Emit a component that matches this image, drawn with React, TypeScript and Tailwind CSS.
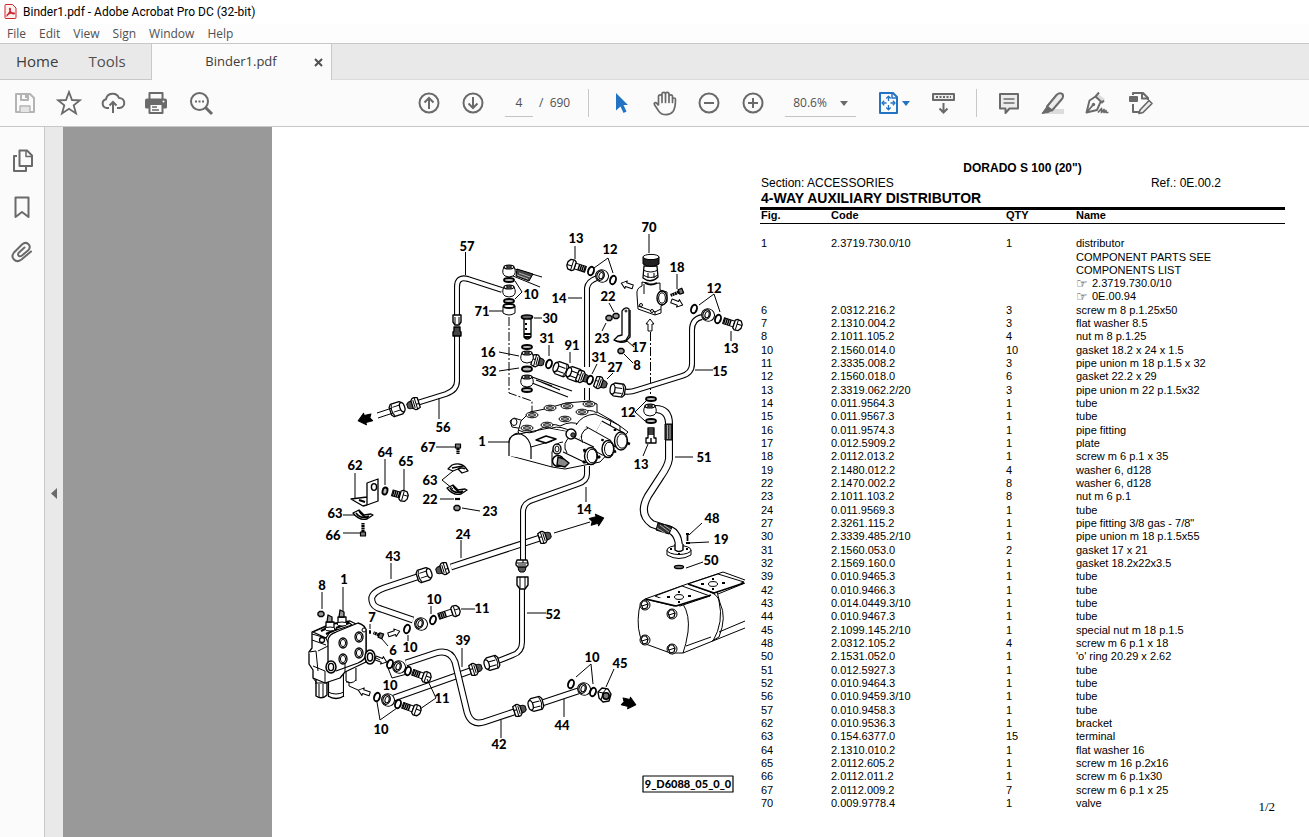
import type { ReactNode } from 'react';

type Point = [number, number];
type Part = { fig: string; code: string; qty: string; name: string };

const menus = ['File', 'Edit', 'View', 'Sign', 'Window', 'Help'];

const parts: Part[] = [
  { fig: '6', code: '2.0312.216.2', qty: '3', name: 'screw m 8 p.1.25x50' },
  { fig: '7', code: '2.1310.004.2', qty: '3', name: 'flat washer 8.5' },
  { fig: '8', code: '2.1011.105.2', qty: '4', name: 'nut m 8 p.1.25' },
  { fig: '10', code: '2.1560.014.0', qty: '10', name: 'gasket 18.2 x 24 x 1.5' },
  { fig: '11', code: '2.3335.008.2', qty: '3', name: 'pipe union m 18 p.1.5 x 32' },
  { fig: '12', code: '2.1560.018.0', qty: '6', name: 'gasket 22.2 x 29' },
  { fig: '13', code: '2.3319.062.2/20', qty: '3', name: 'pipe union m 22 p.1.5x32' },
  { fig: '14', code: '0.011.9564.3', qty: '1', name: 'tube' },
  { fig: '15', code: '0.011.9567.3', qty: '1', name: 'tube' },
  { fig: '16', code: '0.011.9574.3', qty: '1', name: 'pipe fitting' },
  { fig: '17', code: '0.012.5909.2', qty: '1', name: 'plate' },
  { fig: '18', code: '2.0112.013.2', qty: '1', name: 'screw m 6 p.1 x 35' },
  { fig: '19', code: '2.1480.012.2', qty: '4', name: 'washer 6, d128' },
  { fig: '22', code: '2.1470.002.2', qty: '8', name: 'washer 6, d128' },
  { fig: '23', code: '2.1011.103.2', qty: '8', name: 'nut m 6 p.1' },
  { fig: '24', code: '0.011.9569.3', qty: '1', name: 'tube' },
  { fig: '27', code: '2.3261.115.2', qty: '1', name: 'pipe fitting 3/8 gas - 7/8"' },
  { fig: '30', code: '2.3339.485.2/10', qty: '1', name: 'pipe union m 18 p.1.5x55' },
  { fig: '31', code: '2.1560.053.0', qty: '2', name: 'gasket 17 x 21' },
  { fig: '32', code: '2.1569.160.0', qty: '1', name: 'gasket 18.2x22x3.5' },
  { fig: '39', code: '0.010.9465.3', qty: '1', name: 'tube' },
  { fig: '42', code: '0.010.9466.3', qty: '1', name: 'tube' },
  { fig: '43', code: '0.014.0449.3/10', qty: '1', name: 'tube' },
  { fig: '44', code: '0.010.9467.3', qty: '1', name: 'tube' },
  { fig: '45', code: '2.1099.145.2/10', qty: '1', name: 'special nut m 18 p.1.5' },
  { fig: '48', code: '2.0312.105.2', qty: '4', name: 'screw m 6 p.1 x 18' },
  { fig: '50', code: '2.1531.052.0', qty: '1', name: "'o' ring 20.29 x 2.62" },
  { fig: '51', code: '0.012.5927.3', qty: '1', name: 'tube' },
  { fig: '52', code: '0.010.9464.3', qty: '1', name: 'tube' },
  { fig: '56', code: '0.010.9459.3/10', qty: '1', name: 'tube' },
  { fig: '57', code: '0.010.9458.3', qty: '1', name: 'tube' },
  { fig: '62', code: '0.010.9536.3', qty: '1', name: 'bracket' },
  { fig: '63', code: '0.154.6377.0', qty: '15', name: 'terminal' },
  { fig: '64', code: '2.1310.010.2', qty: '1', name: 'flat washer 16' },
  { fig: '65', code: '2.0112.605.2', qty: '1', name: 'screw m 16 p.2x16' },
  { fig: '66', code: '2.0112.011.2', qty: '1', name: 'screw m 6 p.1x30' },
  { fig: '67', code: '2.0112.009.2', qty: '7', name: 'screw m 6 p.1 x 25' },
  { fig: '70', code: '0.009.9778.4', qty: '1', name: 'valve' },
];

// Callout numbers of the exploded view: text, x, y (centre)
const callouts: [string, number, number][] = [
  ['57', 467, 246], ['10', 531, 294], ['71', 482, 311], ['30', 550, 318], ['31', 547, 338],
  ['16', 488, 352], ['32', 489, 371], ['91', 572, 345], ['31', 599, 357], ['27', 615, 367],
  ['13', 576, 238], ['12', 610, 249], ['70', 649, 227], ['18', 677, 267], ['14', 559, 298],
  ['22', 608, 296], ['23', 602, 338], ['17', 639, 347], ['8', 637, 365], ['12', 714, 288],
  ['13', 731, 348], ['15', 720, 371], ['12', 628, 412], ['13', 641, 464], ['51', 704, 457],
  ['56', 443, 427], ['1', 482, 441], ['67', 428, 447], ['63', 430, 480], ['22', 430, 499],
  ['23', 490, 511], ['62', 355, 465], ['64', 385, 452], ['65', 406, 461], ['63', 335, 513],
  ['66', 333, 535], ['24', 463, 534], ['43', 393, 556], ['14', 584, 509], ['48', 712, 518],
  ['19', 721, 539], ['50', 711, 560], ['8', 322, 585], ['1', 344, 579], ['7', 372, 617],
  ['6', 393, 650], ['10', 434, 599], ['11', 482, 608], ['10', 410, 647], ['39', 463, 640],
  ['10', 390, 685], ['11', 442, 698], ['10', 381, 729], ['42', 499, 744], ['52', 553, 614],
  ['10', 592, 657], ['45', 620, 663], ['44', 562, 725],
];

const leaders = [
  'M465.5 252V275', 'M515 281L522 292L515 299', 'M489 311H503', 'M534 318H542', 'M549 345V356',
  'M499 352L519 356', 'M499 371L519 368', 'M570 352V363', 'M597 364L592 374', 'M613 373L607 379',
  'M575 246V259', 'M594 268L608 258L613 273', 'M649 234V253', 'M677 274V289', 'M568 298H582',
  'M609 303L614 312', 'M602 331L606 323', 'M626 340L634 347', 'M633 363L624 354',
  'M699 305L714 294L720 312', 'M731 331V341', 'M695 370H713', 'M646 401L635 412L645 421',
  'M643 456L648 444', 'M675 457H693', 'M439 398V419', 'M488 442H510', 'M436 447H455',
  'M453 471L442 480L453 489', 'M440 499H454', 'M462 508L480 511', 'M355 473V498', 'M385 459V485',
  'M404 469V490', 'M343 515H355', 'M343 533H360', 'M461 540V558', 'M391 563V579', 'M586 487V502',
  'M702 523L689 535', 'M709 542L688 543', 'M686 568L703 562', 'M322 592V609', 'M343 587V611',
  'M370 624V629', 'M388 646L382 639', 'M431 606V614', 'M461 609H475', 'M408 635V641', 'M462 648V667',
  'M388 668L392 678L407 674', 'M427 679L436 698L420 709', 'M377 702L380 720L397 708', 'M501 720V738',
  'M527 613H546', 'M576 677L591 664L593 684', 'M614 669L606 687', 'M564 699V717',
  'M554 533L590 522', 'M377 413L392 408M378 418L393 413', 'M346 682H349V686L358 690M374 657L380 660',
];

function Tube({ d, w = 6 }: { d: string; w?: number }) {
  return (
    <g fill="none">
      <path d={d} stroke="#000" strokeWidth={w} />
      <path d={d} stroke="#fff" strokeWidth={w - 2.2} />
    </g>
  );
}

function Ring({ at, rx = 5, ry = 2, rot = 0 }: { at: Point; rx?: number; ry?: number; rot?: number }) {
  return (
    <ellipse cx={at[0]} cy={at[1]} rx={rx} ry={ry} fill="#bbb" strokeWidth={1.9}
      transform={`rotate(${rot} ${at[0]} ${at[1]})`} />
  );
}

// Ring seen from the side, as threaded on a banjo bolt
function SideRing({ at }: { at: Point }) {
  return (
    <ellipse cx={at[0]} cy={at[1]} rx={2.8} ry={4.4} fill="#fff" strokeWidth={1.9}
      transform={`rotate(18 ${at[0]} ${at[1]})`} />
  );
}

// Vertical banjo eye
function Banjo({ at }: { at: Point }) {
  return (
    <g transform={`translate(${at[0]} ${at[1]})`} fill="#fff">
      <path d="M-5-4Q-8 2-4 5Q0 7 4 5Q8 2 5-4Z" />
      <ellipse cy={-4} rx={5} ry={1.9} strokeWidth={1.3} />
      <ellipse cy={-4} rx={2.8} ry={0.8} />
    </g>
  );
}

// Banjo eye that faces the reader
function Eye({ at }: { at: Point }) {
  return (
    <g transform={`translate(${at[0]} ${at[1]}) rotate(18)`} fill="#fff">
      <ellipse rx={6.5} ry={6.2} />
      <ellipse cx={-1.5} rx={3.6} ry={4.8} strokeWidth={1.3} />
      <ellipse cx={-1} rx={2} ry={3.2} />
    </g>
  );
}

function HexNut({ at, rot }: { at: Point; rot: number }) {
  return (
    <g transform={`translate(${at[0]} ${at[1]}) rotate(${rot})`} fill="#fff">
      <path d="M-6-5L-4-6.500H5L7-4V4L5 6.500H-4L-6 5Z" strokeWidth={1.3} />
      <path d="M-6-2H4M-6 3H4M4-6Q7 0 4 6" />
      <ellipse cx={-5.5} rx={2.4} ry={4.8} strokeWidth={1.3} />
    </g>
  );
}

// Collar with a threaded tip
function Fitting({ at, rot }: { at: Point; rot: number }) {
  return (
    <g transform={`translate(${at[0]} ${at[1]}) rotate(${rot})`} fill="#fff">
      <path d="M0-4L5-3.500L7-2V2L5 3.500L0 4Z" fill="#555" />
      <path d="M-5-5L-2-6H0L2-4V4L0 6H-2L-5 5Z" strokeWidth={1.3} />
      <path d="M-2-6V6M0-4V4M-5-1H-2" />
    </g>
  );
}

function Bolt({ at, rot, len = 11 }: { at: Point; rot: number; len?: number }) {
  return (
    <g transform={`translate(${at[0]} ${at[1]}) rotate(${rot})`} fill="#fff">
      <rect x={-len} y={-3} width={len} height={6} />
      <path d={`M${-len + 1}-3V3M${-len + 3}-3V3M${-len + 5}-3V3M${-len + 7}-3V3`} strokeWidth={1.5} />
      <path d="M0-4L2-5.500L6-5L8-2V2L6 5L2 5.500L0 4Z" strokeWidth={1.3} />
      <path d="M3-5V5M3-1H8" />
    </g>
  );
}

function SmallScrew({ at, rot, len = 9 }: { at: Point; rot: number; len?: number }) {
  return (
    <g transform={`translate(${at[0]} ${at[1]}) rotate(${rot})`}>
      <path d={`M0 0H${-len}`} strokeWidth={3.2} strokeDasharray="2 0.500" />
      <rect x={0} y={-2.5} width={4} height={5} fill="#777" strokeWidth={1.2} />
    </g>
  );
}

function SmallNut({ at }: { at: Point }) {
  return (
    <g transform={`translate(${at[0]} ${at[1]})`} fill="#999">
      <path d="M-3-1L-1.500-2.500H1.500L3-1V1L1.500 2.500H-1.500L-3 1Z" strokeWidth={1.4} />
    </g>
  );
}

function FlowArrow({ at, rot, solid = false }: { at: Point; rot: number; solid?: boolean }) {
  return (
    <path
      d={solid ? 'M-7-3.500H0V-6L7 0L0 6V3.500H-7L-5 0Z' : 'M-6-2H1V-4L6 0L1 4V2H-6Z'}
      transform={`translate(${at[0]} ${at[1]}) rotate(${rot})`}
      fill={solid ? '#000' : '#fff'}
    />
  );
}

function Clamp({ at, flip = false }: { at: Point; flip?: boolean }) {
  return (
    <g transform={`translate(${at[0]} ${at[1]})`}>
      {flip ? (
        <>
          <path d="M-10-2L-4-5L1 0L8-1L10 0L4 4Q-4 6-10-2Z" fill="#fff" strokeWidth={1.3} />
          <path d="M-7-2Q-2 5 6 1M-4-4Q0 2 5 3" strokeWidth={1.6} />
        </>
      ) : (
        <>
          <path d="M-10 0L-6-4Q2-7 7-2L10 2L4 4L0 0L-5 2Z" fill="#fff" strokeWidth={1.3} />
          <path d="M-6-1L5-3M0 0Q4-2 7 0" strokeWidth={1.4} />
        </>
      )}
    </g>
  );
}

// Distributor block in the middle of the view
function Distributor() {
  const ports: Point[] = [
    [532, 415], [550, 408], [567, 406], [589, 404], [527, 428], [547, 425], [565, 419], [582, 412],
  ];
  return (
    <g fill="#fff">
      <path d="M510 421L514 418L524 421V429L512 427Z" />
      <ellipse cx={514} cy={422} rx={3} ry={3.5} />
      <path d="M518 432L521 421L530 412L545 409L566 403L590 401L597 404V412L611 420L620 426L628 432L600 462L565 469L552 467L511 456V440Q512 433 519 433Z" />
      <path d="M509 456V441Q511 433 521 434Q530 438 531 448V459" strokeWidth={1.2} />
      <path d="M519 434L549 428L566 431M518 430Q530 436 540 429Q552 422 560 426Q572 420 580 425M531 447L552 441M580 413Q590 408 597 413" />
      <path d="M552 467V452Q556 442 563 442M552 428Q560 425 572 432" />
      <path d="M536 440L546 436L556 439L546 443Z" strokeWidth={1.5} />
      <path d="M576 425Q582 415 595 414L611 421L609 431M609 420L620 426V432" />
      <Tube d="M598 428L620 440" w={17} />
      <Tube d="M582 434L607 448" w={18} />
      <Tube d="M567 444L590 455" w={19} />
      <path d="M567 453Q561 443 571 436M583 443Q578 433 588 428" />
      <ellipse cx={591} cy={456} rx={6.5} ry={8.5} strokeWidth={1.4} />
      <ellipse cx={592} cy={456} rx={4.8} ry={6.8} />
      <ellipse cx={608} cy={449} rx={6} ry={8.5} strokeWidth={1.4} />
      <ellipse cx={609} cy={449} rx={4.5} ry={6.8} />
      <ellipse cx={621} cy={441} rx={6.5} ry={9} strokeWidth={1.4} />
      <ellipse cx={622} cy={441} rx={5} ry={7.2} />
      {ports.map(([x, y]) => (
        <g key={`${x}-${y}`}>
          <ellipse cx={x} cy={y} rx={6} ry={2.8} />
          <ellipse cx={x} cy={y} rx={3.6} ry={1.3} fill="#ccc" />
        </g>
      ))}
      <ellipse cx={557} cy={449} rx={4} ry={5} strokeWidth={1.4} />
      <ellipse cx={557} cy={449} rx={2} ry={3} />
      <circle cx={571} cy={434} r={5} strokeWidth={1.4} />
      <circle cx={573} cy={435} r={2.2} fill="#555" />
      <circle cx={558} cy={461} r={5.5} strokeWidth={1.5} />
      <path d="M558 457L564 459L569 463L565 467L557 465Z" fill="#888" strokeWidth={1.4} />
      <path d="M585 452L584 449M585 463L583 461M598 458L600 456M602 441L603 439M614 452L616 451M627 443L630 444M615 431V429" strokeWidth={2.6} />
    </g>
  );
}

// Valve block at the lower left, seen assembled
function LowerValve() {
  const ports: Point[] = [[343, 643], [359, 637], [343, 659], [359, 653]];
  return (
    <g fill="#fff">
      <Tube d="M351 668V681" w={11} />
      <path d="M346 681Q351 685 356 680" />
      <Tube d="M336 672V697" w={16} />
      <path d="M328 696Q336 701 344 696" strokeWidth={1.4} />
      <path d="M328 692Q336 696 344 692" />
      <path d="M316 679H327V695Q322 700 316 696Z" strokeWidth={1.4} />
      <path d="M319 684V697M323 684V697M315 683H327" />
      <path d="M312 640V632L330 624L350 621L366 629V662L345 672L340 678L325 683L313 678V670L309 664V652L312 648Z" strokeWidth={1.3} />
      <path d="M328 672V640Q329 634 336 632L358 623Q366 625 366 632V655Q365 660 358 663L336 671" strokeWidth={1.3} />
      <path d="M312 634L326 638L328 643M312 640L326 645M309 652L316 651L318 671M313 666L325 671M318 651L328 646M313 678L316 682M325 671V683M345 661V672" />
      <path d="M313 632L332 624L348 622L352 625L330 632L326 638Z" fill="#fff" strokeWidth={1.3} />
      <path d="M321 631L333 625M326 634L337 629M336 628L349 623" strokeWidth={2} />
      {[330, 342].map((x, i) => (
        <g key={x} transform={`translate(${x} ${620 - i * 5})`}>
          <path d="M-4 2H4V9Q0 11-4 9Z" strokeWidth={1.3} />
          <path d="M-2-5L2-3V2H-3Z" fill="#999" strokeWidth={1.3} />
          <ellipse cy={9} rx={5} ry={2} />
        </g>
      ))}
      <circle cx={322} cy={640} r={2.5} strokeWidth={1.3} />
      {ports.map(([x, y]) => (
        <g key={`${x}-${y}`}>
          <ellipse cx={x} cy={y} rx={4} ry={5} strokeWidth={1.3} />
          <ellipse cx={x} cy={y} rx={2.6} ry={3.6} />
        </g>
      ))}
      <ellipse cx={370} cy={657} rx={5} ry={7} strokeWidth={1.5} />
      <ellipse cx={370} cy={657} rx={2.6} ry={4} strokeWidth={1.5} />
      <ellipse cx={331} cy={667} rx={5} ry={6} strokeWidth={1.5} />
      <ellipse cx={331} cy={667} rx={2.6} ry={3.6} strokeWidth={1.4} />
      <circle cx={364} cy={630} r={2} />
    </g>
  );
}

function Pump() {
  const bolts: Point[] = [[645, 605], [672, 614], [645, 640], [672, 649]];
  return (
    <g fill="#fff">
      <path d="M645 599L687 584L722 572L745 580V628L683 653L673 654L643 643Q636 631 638 616Q640 602 645 599Z" stroke="none" />
      <path d="M645 599Q641 601 639 610Q636 630 643 643L673 654Q683 642 682 627Q682 613 674 606Z" />
      <path d="M645 599L687 584L723 572L745 580M674 606L683 604Q690 615 688 632Q686 645 683 653H673M683 604L715 594" />
      <path d="M710 592Q718 595 719 601Q724 622 713 641M717 592L720 603Q727 617 719 637L712 641M683 653L745 628M686 646L711 637M719 632L745 621M718 594L745 583" />
      <path d="M655 596L682 586L710 596L680 606Z" />
      <path d="M688 584L718 574L744 582L714 593Z" />
      <path d="M646 599L676 606L711 595M688 584L714 593L744 583" strokeWidth={1.6} />
      <ellipse cx={679} cy={597} rx={4.5} ry={2.4} />
      <ellipse cx={713} cy={584} rx={4.5} ry={2.4} />
      <path d="M667 597H670M688 596H691M678 592H680M678 602H680M701 584H704M722 583H725M712 579H714M712 589H714" strokeWidth={2.2} />
      {bolts.map(([x, y]) => (
        <g key={`${x}-${y}`} transform={`translate(${x} ${y})`}>
          <circle r={5} />
          <path d="M-4-1L-2-4H1L3-1L2 3L-2 4Z" strokeWidth={1.2} />
          <path d="M-3 1L3-1" />
        </g>
      ))}
    </g>
  );
}

function ReliefValve() {
  return (
    <g fill="#fff">
      <path d="M644 266H657L658 277Q651 284 643 278Z" strokeWidth={1.3} />
      <path d="M643 270Q651 274 658 270M643 275Q651 280 658 275M648 273V278M654 273V278" />
      <path d="M643 257V264Q651 269 659 264V257Z" fill="#222" />
      <ellipse cx={651} cy={257} rx={8} ry={2.6} />
      <path d="M642 282Q651 285 660 283V290L667 292V302L661 306V313L655 315L638 309L637 295Q636 288 642 286Z" />
      <path d="M644 284V294M638 306L655 312L661 309M655 311V315" />
      <ellipse cx={662} cy={298} rx={5} ry={7} strokeWidth={1.4} />
      <ellipse cx={662} cy={298} rx={3.4} ry={5.2} />
      <circle cx={641} cy={305} r={1.5} />
      <circle cx={652} cy={311} r={1.5} />
      <path d="M645 283Q651 286 657 283" strokeWidth={1.8} />
    </g>
  );
}

function ExplodedView() {
  return (
    <svg
      viewBox="300 200 445 600"
      className="h-[600px] w-[445px] shrink-0 font-['Lato',sans-serif] text-[13px] font-black"
      fill="none"
      stroke="#000"
      strokeWidth={1}
      strokeLinejoin="round"
      role="img"
      aria-label="4-way auxiliary distributor, exploded view"
    >
      {/* dash-dot assembly axes */}
      <path d="M509 317V393L532 401V412M650.500 332V394" strokeDasharray="9 2 2 2" />

      {/* delivery tubes 57 and 56 */}
      <Tube d="M457 315V287Q457 276 468 279L502 290" />
      <Tube d="M457 336V381Q457 390 446 394L417 403" />
      <path d="M453 315H461V322L459 325H455L453 322Z" fill="#fff" strokeWidth={1.4} />
      <path d="M455 317V324M459 317V324" />
      <path d="M454 327H460V331L461 332V336H453V332L454 331Z" fill="#444" strokeWidth={1.4} />
      <Fitting at={[414, 404]} rot={162} />
      <HexNut at={[397, 409]} rot={162} />
      <FlowArrow at={[365, 419]} rot={166} solid />

      {/* banjo stack 10 / 71 */}
      <path d="M515 269L542 277M513 276L540 287" />
      <path d="M517 269L533 274L529 281L516 276Z" fill="#444" />
      <path d="M519 273L530 277M517 275L528 279" stroke="#fff" strokeWidth={0.6} />
      <Banjo at={[509, 271]} />
      <Ring at={[509, 280]} />
      <Banjo at={[509, 291]} />
      <Ring at={[509, 301]} />
      <path d="M503 306V313Q509 317 515 313V306Z" fill="#fff" />
      <ellipse cx={509} cy={306} rx={5.5} ry={2} fill="#fff" strokeWidth={1.8} />

      {/* banjo stack 30 / 16 / 32 */}
      <path d="M524 318V337Q527 341 531 337V318Z" fill="#fff" strokeWidth={1.3} />
      <path d="M524 334H531M524 337H531M525 324H527M525 329H527" strokeWidth={1.8} />
      <ellipse cx={527} cy={317} rx={5.5} ry={2} fill="#666" strokeWidth={1.7} />
      <Ring at={[527, 347]} />
      <Fitting at={[537, 361]} rot={15} />
      <Banjo at={[527, 357]} />
      <Ring at={[527, 369]} ry={2.5} />
      <path d="M532 377L572 391M532 383L568 397M541 382L560 390M536 380L552 386" strokeWidth={1.2} />
      <Banjo at={[527, 381]} />
      <Ring at={[527, 390]} />

      {/* check valve 91 with its gaskets */}
      <Tube d="M587 400V388M587 367V288Q588 281 597 278" />
      <SideRing at={[549, 364]} />
      <HexNut at={[561, 369]} rot={20} />
      <HexNut at={[574, 374]} rot={20} />
      <Fitting at={[582, 377]} rot={20} />
      <SideRing at={[590, 380]} />
      <Fitting at={[600, 383]} rot={20} />
      <Tube d="M622 391Q629 393 637 390L682 376Q692 373 692 364V330Q692 319 702 317" />
      <HexNut at={[618, 390]} rot={8} />
      <Eye at={[708, 315]} />
      <SideRing at={[694, 309]} />
      <SideRing at={[718, 319]} />
      <Bolt at={[734, 324]} rot={18} />

      {/* top union 13 */}
      <Eye at={[602, 276]} />
      <Bolt at={[575, 266]} rot={198} />
      <SideRing at={[591, 271]} />
      <SideRing at={[613, 280]} />

      {/* valve 70 and its bracket */}
      <ReliefValve />
      <SmallScrew at={[679, 292]} rot={-22} />
      <FlowArrow at={[627, 285]} rot={198} />
      <FlowArrow at={[677, 303]} rot={20} />
      <FlowArrow at={[650, 325]} rot={-90} />
      <path d="M622 335V311Q625 306 629 309V335L626 340Q620 343 614 340L618 336Z" fill="#fff" strokeWidth={1.3} />
      <path d="M630 310V337L626 341M614 340Q620 344 627 341" strokeWidth={1.4} />
      <circle cx={626} cy={311} r={1} />
      <SmallNut at={[616, 316]} />
      <SmallNut at={[609, 318]} />
      <SmallNut at={[621, 351]} />

      <Distributor />

      {/* suction tube 51 */}
      <Tube d="M655 409Q669 409 669 424V459Q668 466 661 476L648 496Q638 514 652 524L664 528Q679 530 679 548" w={8} />
      <path d="M665 424H672V440H665Z" fill="#333" />
      <path d="M667.500 425V439M670 425V439" stroke="#fff" strokeWidth={0.6} />
      <path d="M658 523L672 527L669 534L656 530Z" fill="#333" />
      <path d="M660 525L669 532M657 528L665 533M664 525L671 530" stroke="#fff" strokeWidth={0.6} />
      <Banjo at={[650, 410]} />
      <Ring at={[651, 399]} />
      <Ring at={[651, 421]} />
      <path d="M648 428H654V438H656V443H646V438H648Z" fill="#fff" strokeWidth={1.3} />
      <path d="M648 430H654M648 432H654M648 434H654M651 438V443" strokeWidth={1.4} />
      <path d="M667 550V555Q679 562 691 555V550Z" fill="#fff" />
      <ellipse cx={679} cy={550} rx={12} ry={4.5} fill="#fff" />
      <path d="M675 544V550Q679 553 683 550V544" fill="#fff" strokeWidth={1.4} />
      <path d="M670 549H672M686 549H688M678 554H680" strokeWidth={2} />
      <path d="M687.500 533V541M686 534H689M686 543H690" strokeWidth={1.8} />
      <ellipse cx={679} cy={567} rx={4.5} ry={1.6} strokeWidth={1.4} fill="#777" />

      {/* clamps and bracket */}
      <SmallScrew at={[458, 448]} rot={-90} len={6} />
      <Clamp at={[458, 469]} />
      <Clamp at={[457, 490]} flip />
      <path d="M455 499H460" strokeWidth={2.2} />
      <SmallNut at={[457, 508]} />
      <path d="M367 483L378 479V501L367 505ZM367 497L351 499L363 506L367 505" fill="#fff" strokeWidth={1.3} />
      <ellipse cx={374} cy={487} rx={2.6} ry={3.4} strokeWidth={1.4} />
      <path d="M359 500L365 502" strokeWidth={2} />
      <Ring at={[385, 491]} rx={2.4} ry={3.6} rot={15} />
      <Bolt at={[400, 495]} rot={16} len={8} />
      <Clamp at={[363, 515]} flip />
      <SmallScrew at={[363, 532]} rot={90} />

      {/* tube 14, lower run, and tube 52 */}
      <Tube d="M451 567L540 538" w={7} />
      <Tube d="M587 466V474Q587 481 578 484L533 500Q523 503 523 512V563" />
      <Fitting at={[522, 565]} rot={90} />
      <Tube d="M522 588V642Q522 652 513 655L498 661" />
      <path d="M517 577H528V585L525 589H520L517 585Z" fill="#fff" strokeWidth={1.4} />
      <path d="M520 577V588M525 577V588" />
      <HexNut at={[492, 663]} rot={-16} />

      {/* tubes 24 and 43 */}
      <Fitting at={[443, 569]} rot={162} />
      <Fitting at={[544, 537]} rot={-18} />
      <FlowArrow at={[597, 520]} rot={-16} solid />
      <Tube d="M417 577L384 588Q370 593 372 601Q373 607 381 609L413 620" w={7} />
      <HexNut at={[424, 575]} rot={162} />
      <Eye at={[421, 624]} />
      <SideRing at={[433, 620]} />
      <SideRing at={[407, 629]} />
      <Bolt at={[452, 612]} rot={-18} len={14} />
      <FlowArrow at={[394, 633]} rot={-18} />

      {/* tubes 39 and 42 */}
      <Tube d="M394 698L470 671" w={7} />
      <Tube d="M406 663L436 653Q450 649 455 662L467 712Q471 726 484 722L514 712" w={7} />
      <Fitting at={[475, 669]} rot={-18} />
      <Fitting at={[519, 710]} rot={-18} />
      <FlowArrow at={[381, 660]} rot={20} />
      <Eye at={[399, 667]} />
      <Eye at={[388, 700]} />
      <SideRing at={[390, 664]} />
      <SideRing at={[408, 671]} />
      <SideRing at={[377, 697]} />
      <SideRing at={[398, 704]} />
      <Bolt at={[423, 676]} rot={20} />
      <Bolt at={[413, 709]} rot={20} />
      <FlowArrow at={[364, 692]} rot={198} />

      {/* tube 44 */}
      <Tube d="M542 703L578 691" w={7} />
      <HexNut at={[536, 704]} rot={-14} />
      <Eye at={[584, 689]} />
      <SideRing at={[571, 684]} />
      <SideRing at={[593, 692]} />
      <path d="M598 692L602 688L608 689L611 694L609 701L603 702L599 698Z" fill="#fff" strokeWidth={1.4} />
      <circle cx={606} cy={696} r={3.2} fill="#777" strokeWidth={1.6} />
      <path d="M598 692L603 693L606 689M603 693L601 700" />
      <FlowArrow at={[629, 703]} rot={14} solid />

      <LowerValve />
      <SmallNut at={[321, 614]} />
      <SmallScrew at={[379, 635]} rot={22} len={6} />
      <path d="M369 632H371" strokeWidth={3.5} />
      <Pump />

      {leaders.map((d) => <path key={d} d={d} />)}

      <g stroke="none" fill="#000" textAnchor="middle">
        {callouts.map(([text, x, y]) => (
          <text key={`${x}-${y}`} x={x} y={y + 5}>{text}</text>
        ))}
      </g>

      <rect x={643} y={776} width={90} height={16} strokeWidth={1.2} />
      <text x={688} y={788} textAnchor="middle" stroke="none" fill="#000" className="text-[11px]">9_D6088_05_0_0</text>
    </svg>
  );
}

function Icon({ children, size = 26 }: { children: ReactNode; size?: number }) {
  return (
    <svg width={size} height={size} viewBox="0 0 26 26" fill="none" stroke="currentColor" strokeWidth={2} strokeLinejoin="round">
      {children}
    </svg>
  );
}

function ToolButton({ label, children, className = '' }: { label: string; children: ReactNode; className?: string }) {
  return (
    <button type="button" aria-label={label} className={`flex h-11 w-11 items-center justify-center ${className}`}>
      {children}
    </button>
  );
}

function TitleBar() {
  return (
    <div className="flex h-6 items-center gap-[3px] bg-white pl-1 font-['Roboto',sans-serif] text-[12px] text-black">
      <svg width="16" height="16" viewBox="0 0 16 16" fill="none" stroke="#c9252d">
        <path d="M1 1.500Q1 .5 2 .5H8.500L12 4V13.500Q12 14.500 11 14.500H2Q1 14.500 1 13.500Z" fill="#fff0ee" />
        <path d="M3 11.500C4.500 10 6.500 7 6.300 5C6.200 4 5.300 4.200 5.700 5.500C6.200 7.500 8 9.800 10 9.800C11.100 9.500 10 8.700 8 8.900C6 9.100 3 10.300 3 11.500Z" strokeWidth="1.300" />
      </svg>
      <span>Binder1.pdf - Adobe Acrobat Pro DC (32-bit)</span>
    </div>
  );
}

function MenuBar() {
  return (
    <nav className="flex h-[19px] items-center gap-[13px] bg-[#fdfdfd] px-[7px] text-[12px] leading-[18px] text-[#505050]">
      {menus.map((menu) => (
        <button key={menu} type="button">{menu}</button>
      ))}
    </nav>
  );
}

function TabBar() {
  return (
    <div className="flex h-[37px] border-t border-[#c8c8c8] bg-[#e9e9e9] text-[#3c3c3c]">
      <div className="flex w-[152px] items-center gap-[30px] border-r border-b border-[#c8c8c8] pl-4 text-[15px]">
        <button type="button">Home</button>
        <button type="button" className="text-[#505050]">Tools</button>
      </div>
      <div className="flex w-[180px] items-center border-r border-[#c8c8c8] bg-[#fbfbfb] pl-4 text-[13px]">
        <button type="button" className="flex-1 text-center">Binder1.pdf</button>
        <button type="button" aria-label="Close tab" className="mr-2 text-[#505050]">
          <svg width="9" height="9" viewBox="0 0 9 9" stroke="currentColor" strokeWidth="2">
            <path d="M1 1L8 8M8 1L1 8" />
          </svg>
        </button>
      </div>
      <div className="flex-1 border-b border-[#dcdcdc]" />
    </div>
  );
}

function Toolbar() {
  return (
    <div className="flex h-[47px] items-center border-b border-[#c8c8c8] bg-[#fbfbfb] pl-[3px] text-[#6a6a6a]">
      <ToolButton label="Save" className="text-[#b4b4b4]">
        <Icon>
          <path d="M4 4H18L22 8V22H4Z" />
          <path d="M9 4V10H16V4M14 5V8" />
          <path d="M8 22V16H18V22" fill="#e4e4e4" strokeWidth={1.4} />
        </Icon>
      </ToolButton>
      <ToolButton label="Star">
        <Icon>
          <path d="M13 2L16 10L24 10.300L17.700 15.300L20 23.500L13 18.800L6 23.500L8.300 15.300L2 10.300L10 10Z" strokeLinejoin="miter" strokeWidth={1.8} />
        </Icon>
      </ToolButton>
      <ToolButton label="Upload">
        <Icon>
          <path d="M9 18H6.500A4.500 4.500 0 0 1 6 9.200A6.800 6.800 0 0 1 19 8A5 5 0 0 1 19.500 18H17" />
          <path d="M13 23V12M9.500 15.500L13 12L16.500 15.500" strokeLinejoin="miter" />
        </Icon>
      </ToolButton>
      <ToolButton label="Print">
        <Icon>
          <path d="M5.500 9V3H18.500V9" />
          <path d="M3 8.500H21A2 2 0 0 1 23 10.500V17A1.500 1.500 0 0 1 21.500 18.500H2.500A1.500 1.500 0 0 1 1 17V10.500A2 2 0 0 1 3 8.500Z" fill="currentColor" stroke="none" />
          <path d="M5.500 14H18.500V23H5.500Z" fill="#fbfbfb" />
          <path d="M8 17H13M8 20H15" strokeWidth={1.400} />
          <circle cx={19.5} cy={11.5} r={1} fill="#fff" stroke="none" />
        </Icon>
      </ToolButton>
      <ToolButton label="Find text">
        <Icon>
          <circle cx={11.5} cy={11.500} r={8.500} />
          <path d="M17.500 17.500L24 24" strokeWidth={3} />
          <path d="M7 11.500H9M10.500 11.500H12.500M14 11.500H16" />
        </Icon>
      </ToolButton>

      <ToolButton label="Previous page" className="ml-[184px]">
        <Icon>
          <circle cx={13} cy={13} r={9.500} />
          <path d="M13 19V8M8.500 12.500L13 8L17.500 12.500" strokeLinejoin="miter" />
        </Icon>
      </ToolButton>
      <ToolButton label="Next page">
        <Icon>
          <circle cx={13} cy={13} r={9.500} />
          <path d="M13 7V18M8.500 13.500L13 18L17.500 13.500" strokeLinejoin="miter" />
        </Icon>
      </ToolButton>
      <label className="ml-[10px] flex items-center gap-1.5 text-[12px]">
        <input
          type="text"
          aria-label="Page number"
          defaultValue="4"
          className="h-7 w-7 border-b border-[#c4c4c4] bg-transparent text-center text-[#505050]"
        />
        <span className="text-[#505050]">/&nbsp; 690</span>
      </label>
      <div className="ml-[18px] h-7 w-px bg-[#c8c8c8]" />

      <ToolButton label="Select" className="ml-[10px]">
        <svg width="26" height="26" viewBox="0 0 26 26" fill="#2273c4">
          <path d="M8 3L20 15H15.500L18.500 21.500L15.500 23L12.500 16.500L8 20.500Z" />
        </svg>
      </ToolButton>
      <ToolButton label="Hand">
        <Icon>
          <path
            d="M6.500 15.500V6.500C6.500 4.300 10 4.300 10 6.500V12.500V4C10 1.700 13.500 1.700 13.500 4V12.500V4C13.500 1.700 17 1.700 17 4V12.500V6.500C17 4.300 20.500 4.300 20.500 6.500V12.500V9.500C20.500 7.500 23.500 7.500 23.500 9.500C23.500 15 23.500 18 21 21.500C18 25.500 10.500 26 7 21.500L2.500 14.800C1.500 13 3.500 11.800 5 13.500L6.500 15.500"
            strokeWidth={1.700}
          />
        </Icon>
      </ToolButton>
      <ToolButton label="Zoom out">
        <Icon>
          <circle cx={13} cy={13} r={9.500} />
          <path d="M8 13H18" />
        </Icon>
      </ToolButton>
      <ToolButton label="Zoom in">
        <Icon>
          <circle cx={13} cy={13} r={9.500} />
          <path d="M8 13H18M13 8V18" />
        </Icon>
      </ToolButton>
      <div className="relative ml-[10px]">
        <select
          aria-label="Zoom level"
          defaultValue="80.6%"
          className="h-7 w-[71px] appearance-none border-b border-[#c4c4c4] bg-transparent pl-2 text-[12px] text-[#505050]"
        >
          <option>80.6%</option>
          <option>100%</option>
        </select>
        <svg width="8" height="5" viewBox="0 0 8 5" fill="currentColor" className="pointer-events-none absolute top-3 right-2">
          <path d="M0 0H8L4 5Z" />
        </svg>
      </div>

      <button type="button" aria-label="Fit page" className="ml-[20px] flex h-11 items-center text-[#2273c4]">
        <Icon>
          <path d="M4 3H17L21 7V23H4Z" />
          <path d="M16 3V8H21" strokeWidth={1.500} />
          <path d="M12.500 6.500V11M12.500 15V19.500M6 13H10.500M14.500 13H19" strokeWidth={1.300} />
          <path d="M10.300 8.500L12.500 6.300L14.700 8.500M10.300 17.500L12.500 19.700L14.700 17.500M8.200 10.800L6 13L8.200 15.200M16.800 10.800L19 13L16.800 15.200" strokeWidth={1.300} />
        </Icon>
        <svg width="8" height="5" viewBox="0 0 8 5" fill="currentColor"><path d="M0 0H8L4 5Z" /></svg>
      </button>
      <ToolButton label="Scrolling" className="ml-3">
        <Icon>
          <path d="M2 4H23V10H2Z" fill="#ececec" />
          <path d="M5 7H20" strokeDasharray="2 1.500" />
          <path d="M12.500 13V22.500M8.500 18.500L12.500 22.500L16.500 18.500" strokeLinejoin="miter" />
        </Icon>
      </ToolButton>
      <div className="ml-[10px] h-7 w-px bg-[#c8c8c8]" />

      <ToolButton label="Comment" className="ml-[10px]">
        <Icon>
          <path d="M4 4H22V18.500H13.500L9.500 23V18.500H4Z" fill="#ececec" />
          <path d="M7.500 9H18.500M7.500 13H18.500" strokeWidth={1.500} />
        </Icon>
      </ToolButton>
      <ToolButton label="Highlight">
        <Icon>
          <path d="M9 19H24V24H5Z" fill="#dcdcdc" stroke="none" />
          <path d="M7 16.500L16.500 5Q19.500 2 22.500 4Q24 6.500 21.500 9.500L12 20.500Z" fill="#ececec" />
          <path d="M7 16.500L12 20.500L8 22.500L2 23.500Z" fill="currentColor" strokeWidth={1} />
        </Icon>
      </ToolButton>
      <ToolButton label="Sign">
        <Icon>
          <path d="M14 4L21 9L18 13L12 7Z" fill="#dcdcdc" stroke="none" />
          <path d="M15 2.500L11.500 6.500L18 12.500L20 10.500M11.500 6.500L5.500 10.500L2.500 22.500L13 20L16.500 12M2.500 22.500L9 15" strokeWidth={1.900} />
          <circle cx={9.500} cy={14.500} r={1.700} fill="currentColor" stroke="none" />
          <path d="M14 22.500L17.500 18.500V22.500L20 19.500V22.500L22 20.500V22.500H24.500" strokeWidth={1.700} />
        </Icon>
      </ToolButton>
      <ToolButton label="Edit PDF">
        <Icon>
          <path d="M5 5V3H15L20 8V10M14 3V8.500H20M5 14V22H12" />
          <rect x={1} y={6} width={9} height={6} rx={1} fill="currentColor" stroke="none" />
          <path d="M12 20L21 10.500L24 13.500L15 22.500L11 23.500Z" fill="#ececec" strokeWidth={1.700} />
        </Icon>
      </ToolButton>
    </div>
  );
}

function Sidebar() {
  return (
    <aside className="flex w-[45px] shrink-0 flex-col items-start border-r border-[#c8c8c8] bg-[#fbfbfb] pt-[11px] text-[#6a6a6a]">
      <ToolButton label="Page thumbnails">
        <Icon>
          <path d="M8 9H5V24H17V20" />
          <path d="M10.500 3.500H18L23 8.500V19H10.500Z" />
          <path d="M17 4V9.500H22.500" strokeWidth={1.500} />
        </Icon>
      </ToolButton>
      <ToolButton label="Bookmarks" className="mt-[3px]">
        <Icon>
          <path d="M6.500 3.500H19.500V23L13 18L6.500 23Z" />
        </Icon>
      </ToolButton>
      <ToolButton label="Attachments">
        <Icon>
          <path
            d="M22 13.500L12.500 21.500C6.500 26 1 19.500 5 14.500L13 6.500C17.500 2.500 23 7.500 19.500 12L13 17.500C10.500 19.500 7.500 17 10 14.500L15.500 9.500"
            strokeLinecap="round"
          />
        </Icon>
      </ToolButton>
    </aside>
  );
}

function PartsList() {
  return (
    <section className="ml-[15px] flex-1 pt-[34px] text-[11px] leading-[13px]">
      <h1 className="text-center text-[12px] leading-[15px] font-bold">DORADO S 100 (20")</h1>
      <div className="flex justify-between pr-16 pl-px text-[12px] leading-[15px]">
        <span>Section: ACCESSORIES</span>
        <span>Ref.: 0E.00.2</span>
      </div>
      <h2 className="h-4 pl-px text-[14px] leading-[14px] font-bold">4-WAY AUXILIARY DISTRIBUTOR</h2>
      <table className="w-full table-fixed text-left [&_td]:pl-px [&_th]:pl-px">
        <colgroup>
          <col className="w-[70px]" />
          <col className="w-[175px]" />
          <col className="w-[70px]" />
          <col />
        </colgroup>
        <thead className="border-t-[3px] border-b border-black align-top leading-[11px]">
          <tr className="h-[15px]">
            <th>Fig.</th>
            <th>Code</th>
            <th>QTY</th>
            <th>Name</th>
          </tr>
        </thead>
        <tbody className="align-top">
          <tr className="h-20">
            <td className="pt-[13px]">1</td>
            <td className="pt-[13px]">2.3719.730.0/10</td>
            <td className="pt-[13px]">1</td>
            <td className="pt-[13px]">
              <div className="mb-px">distributor</div>
              <div>COMPONENT PARTS SEE</div>
              <div>COMPONENTS LIST</div>
              <div className="flex gap-1"><span className="w-3 font-['DejaVu_Sans'] text-[13px] text-[#333]">☞</span>2.3719.730.0/10</div>
              <div className="flex gap-1"><span className="w-3 font-['DejaVu_Sans'] text-[13px] text-[#333]">☞</span>0E.00.94</div>
            </td>
          </tr>
        </tbody>
        <tbody className="align-top [&>tr]:h-[13px] [&>tr:nth-child(3n)]:h-[14px]">
          {parts.map((part) => (
            <tr key={part.fig}>
              <td>{part.fig}</td>
              <td>{part.code}</td>
              <td>{part.qty}</td>
              <td>{part.name}</td>
            </tr>
          ))}
        </tbody>
      </table>
      <div className="-mt-2.5 pr-2.5 text-right font-['Liberation_Serif',serif] text-[13px]">1/2</div>
    </section>
  );
}

export default function App() {
  return (
    <div className="flex h-screen flex-col overflow-hidden bg-white font-['Open_Sans',sans-serif]">
      <TitleBar />
      <MenuBar />
      <TabBar />
      <Toolbar />
      <div className="flex min-h-0 flex-1">
        <Sidebar />
        <button type="button" aria-label="Collapse panel" className="flex w-[18px] shrink-0 items-center justify-center bg-[#e9e9e9] pt-[22px] text-[#6a6a6a]">
          <svg width="6" height="11" viewBox="0 0 6 11" fill="currentColor"><path d="M6 0V11L0 5.500Z" /></svg>
        </button>
        <main className="flex min-w-0 flex-1 overflow-hidden bg-[#999] pl-[209px]">
          <article className="flex flex-1 items-start bg-white pr-6 pl-7 font-['Liberation_Sans',Arial,sans-serif] text-black">
            <div className="pt-[73px]">
              <ExplodedView />
            </div>
            <PartsList />
          </article>
        </main>
      </div>
    </div>
  );
}
